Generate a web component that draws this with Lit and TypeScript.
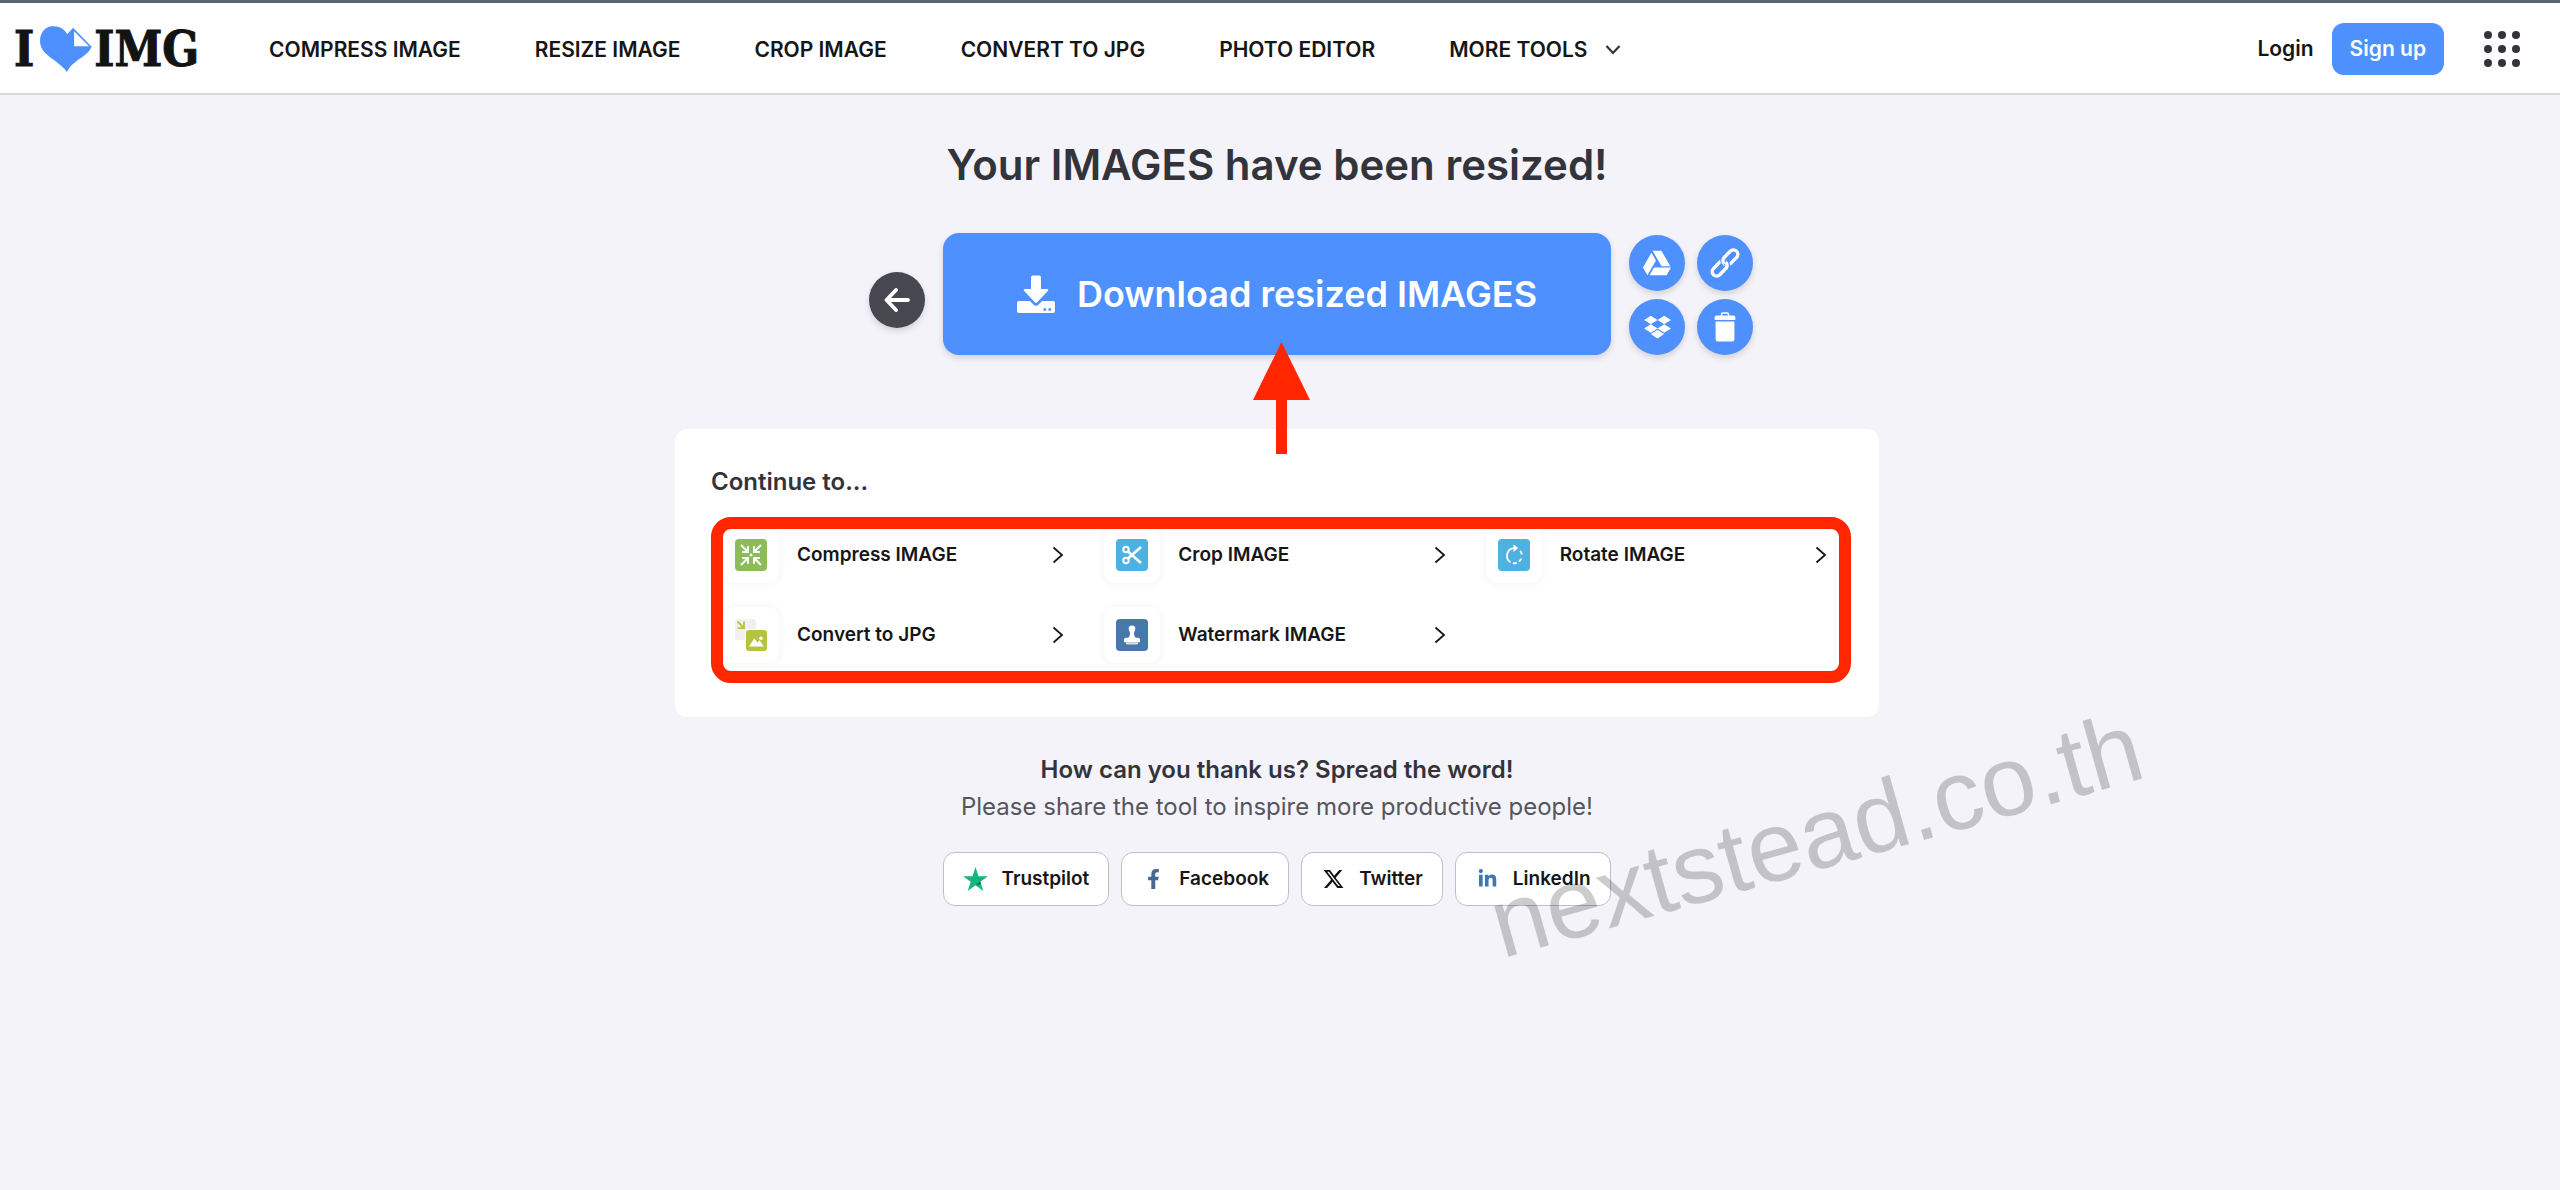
import { LitElement, html, css, svg } from "lit";
import { customElement } from "lit/decorators.js";

interface Tool {
  label: string;
  icon: unknown;
}

const arrowIn = (turn: number) => svg`
  <g transform="rotate(${turn} 16 16)">
    <path d="M6 6l6 6M13 7.200v5.800h-5.800" fill="none" stroke="#fff" stroke-width="2" />
  </g>`;

const compressIcon = html`<svg width="32" height="32" viewBox="0 0 32 32" aria-hidden="true">
  <rect width="32" height="32" rx="4" fill="#8cbc5a" />
  ${arrowIn(0)}${arrowIn(90)}${arrowIn(180)}${arrowIn(270)}
  <circle cx="16" cy="16" r="1.500" fill="#fff" />
</svg>`;

const cropIcon = html`<svg width="32" height="32" viewBox="0 0 32 32" aria-hidden="true">
  <rect width="32" height="32" rx="4" fill="#4db1e2" />
  <g fill="none" stroke="#fff" stroke-width="2">
    <circle cx="10" cy="10.500" r="2.700" />
    <circle cx="10" cy="21.500" r="2.700" />
    <path d="M12 12.500L25 24M12 19.500L25 8" stroke-width="2.600" />
  </g>
</svg>`;

const rotateIcon = html`<svg width="32" height="32" viewBox="0 0 32 32" aria-hidden="true">
  <rect width="32" height="32" rx="4" fill="#4db1e2" />
  <g fill="none" stroke="#fff" stroke-width="1.800">
    <path d="M16.500 9.200A7.600 7.600 0 0 0 12.500 23.200" />
    <path d="M14.800 24.200a7.600 7.600 0 0 0 8.800-5.800M23.900 15.500a7.600 7.600 0 0 0-2-4" stroke-dasharray="4 2.400" />
  </g>
  <path d="M15.500 5.500l4.700 3.600-4.700 3.800z" fill="#fff" />
</svg>`;

const convertIcon = html`<svg width="32" height="32" viewBox="0 0 32 32" aria-hidden="true">
  <rect width="21" height="21" rx="3" fill="#f0f0f3" />
  <path d="M2.500 2.500l6 6M9 2.500v6.700H2.500" fill="none" stroke="#b4c53f" stroke-width="1.800" />
  <rect x="10" y="10" width="22.500" height="22.500" rx="3.500" fill="#fff" />
  <rect x="11" y="11" width="21" height="21" rx="3" fill="#b4c441" />
  <path d="M14 27.500l5.300-8.300 3.200 4.400 2-2.300 4.300 6.200z" fill="#fff" />
  <circle cx="26" cy="19.300" r="1.700" fill="#fff" />
</svg>`;

const watermarkIcon = html`<svg width="32" height="32" viewBox="0 0 32 32" aria-hidden="true">
  <rect width="32" height="32" rx="4" fill="#4678ac" />
  <path
    d="M16 6.500a3.300 3.300 0 0 1 3.300 3.300c0 2.200-1.600 2.600-1.300 5.200.2 1.800.8 3.800 2.400 3.800H22a2 2 0 0 1 2 2v2.400H8v-2.400a2 2 0 0 1 2-2h1.600c1.600 0 2.200-2 2.400-3.800.3-2.600-1.300-3-1.300-5.200A3.300 3.300 0 0 1 16 6.500z"
    fill="#fff"
  />
  <path d="M10 23.200h12v1.400a1 1 0 0 1-1 1H11a1 1 0 0 1-1-1z" fill="#d9dfe6" />
</svg>`;

const chevronRight = html`<svg class="chevron" width="12" height="20" viewBox="0 0 12 20" aria-hidden="true">
  <path d="M1.500 2.500l8.500 7.500-8.500 7.500" fill="none" stroke="#161616" stroke-width="1.800" />
</svg>`;

const TOOLS: Tool[] = [
  { label: "Compress IMAGE", icon: compressIcon },
  { label: "Crop IMAGE", icon: cropIcon },
  { label: "Rotate IMAGE", icon: rotateIcon },
  { label: "Convert to JPG", icon: convertIcon },
  { label: "Watermark IMAGE", icon: watermarkIcon },
];

const NAV = ["COMPRESS IMAGE", "RESIZE IMAGE", "CROP IMAGE", "CONVERT TO JPG", "PHOTO EDITOR"];

const driveIcon = html`<svg width="28" height="28" viewBox="0 0 512 512" aria-hidden="true">
  <path
    fill="#fff"
    d="M339 314.900L175.400 32h161.200l163.600 282.900H339zm-137.500 23.600L120.900 480h310.500L512 338.500H201.500zM154.100 67.400L0 338.500 80.600 480 237 208.800 154.100 67.400z"
  />
</svg>`;

const linkIcon = html`<svg width="30" height="30" viewBox="0 0 30 30" aria-hidden="true">
  <g transform="rotate(-46 15 15)" fill="none">
    <rect x="-1.500" y="10.600" width="17.500" height="8.800" rx="4.400" stroke="#fff" stroke-width="3.400" />
    <rect x="14" y="10.600" width="17.500" height="8.800" rx="4.400" stroke="#4d90fe" stroke-width="5.400" />
    <rect x="14" y="10.600" width="17.500" height="8.800" rx="4.400" stroke="#fff" stroke-width="3.400" />
    <path d="M14.500 19.400c1-.8 1.500-2.500 1.500-4.400" stroke="#4d90fe" stroke-width="5.400" />
    <path d="M11.600 19.400c3.200 0 4.400-2.500 4.400-4.400" stroke="#fff" stroke-width="3.400" />
  </g>
</svg>`;

const dropboxIcon = html`<svg width="27" height="26" viewBox="0 0 528 512" aria-hidden="true">
  <path
    fill="#fff"
    d="M264.400 116.300l-132 84.300 132 84.300-132 84.300L0 284.100l132.300-84.300L0 116.300 132.300 32l132.100 84.300zM131.600 395.700l132-84.300 132 84.300-132 84.300-132-84.300zm132.800-111.600l132-84.300-132-83.600L395.700 32 528 116.300l-132.300 84.300L528 284.800l-132.300 84.300-131.300-85z"
  />
</svg>`;

const trashIcon = html`<svg width="22" height="30" viewBox="0 0 22 30" aria-hidden="true">
  <path d="M7.500 4V2.300A1.300 1.300 0 0 1 8.800 1h4.400a1.300 1.300 0 0 1 1.300 1.300V4" fill="none" stroke="#fff" stroke-width="1.400" />
  <path d="M2.500 3.500h17A1.800 1.800 0 0 1 21.300 5.300V8H.7V5.300A1.800 1.800 0 0 1 2.500 3.500zM1.600 9.600h18.800v17.600a2.200 2.200 0 0 1-2.200 2.200H3.800a2.200 2.200 0 0 1-2.200-2.200z" fill="#fff" />
</svg>`;

const CLOUD = [
  { label: "Save to Google Drive", icon: driveIcon },
  { label: "Share download link", icon: linkIcon },
  { label: "Save to Dropbox", icon: dropboxIcon },
  { label: "Delete files", icon: trashIcon },
];

const SHARE = [
  {
    label: "Trustpilot",
    icon: html`<svg width="25" height="24" viewBox="0 0 25 24" aria-hidden="true">
      <path d="M12.500 0l3 9.200H25l-7.700 5.600 3 9.200-7.800-5.700L4.700 24l3-9.200L0 9.200h9.500z" fill="#12b77f" />
      <path d="M18 16.800l-.7-2-4.800 3.500z" fill="#075b44" />
    </svg>`,
  },
  {
    label: "Facebook",
    icon: html`<svg width="25" height="20" viewBox="0 0 320 512" aria-hidden="true">
      <path
        fill="#48688f"
        d="M279.140 288l14.220-92.660h-88.910v-60.130c0-25.350 12.420-50.060 52.240-50.060h40.420V6.260S260.430 0 225.360 0c-73.220 0-121.080 44.380-121.080 124.720v70.620H22.890V288h81.390v224h100.170V288z"
      />
    </svg>`,
  },
  {
    label: "Twitter",
    icon: html`<svg width="25" height="22" viewBox="0 0 24 24" aria-hidden="true">
      <path
        fill="#111"
        d="M18.244 2.250h3.308l-7.227 8.260 8.502 11.240H16.170l-5.214-6.817L4.990 21.750H1.680l7.730-8.835L1.254 2.250H8.080l4.713 6.231zm-1.161 17.520h1.833L7.084 4.126H5.117z"
      />
    </svg>`,
  },
  {
    label: "LinkedIn",
    icon: html`<svg width="25" height="20" viewBox="0 0 448 512" aria-hidden="true">
      <path
        fill="#3d78b4"
        d="M100.280 448H7.400V148.900h92.880zM53.790 108.100C24.090 108.100 0 83.500 0 53.800a53.790 53.790 0 0 1 107.580 0c0 29.700-24.100 54.300-53.790 54.300zM447.900 448h-92.680V302.400c0-34.700-.7-79.200-48.290-79.200-48.290 0-55.690 37.700-55.690 76.700V448h-92.780V148.900h89.080v40.800h1.300c12.400-23.500 42.690-48.300 87.880-48.300 94 0 111.280 61.900 111.280 142.300V448z"
      />
    </svg>`,
  },
];

@customElement("app-header")
class AppHeader extends LitElement {
  static styles = css`
    :host {
      display: block;
      background: #fff;
      border-top: 3px solid #56666c;
      border-bottom: 2px solid #d9d8e0;
    }
    a {
      color: #161616;
      text-decoration: none;
    }
    .bar {
      display: flex;
      align-items: center;
      box-sizing: border-box;
      min-height: 90px;
      padding: 2px 40px 0 14px;
      font-size: 21px;
      font-weight: 600;
      line-height: 28px;
    }
    .logo {
      display: flex;
      align-items: center;
      margin-right: 70px;
      color: #131313;
      font-family: "DejaVu Serif Condensed", "DejaVu Serif", serif;
      font-size: 48px;
      font-weight: 700;
      line-height: 60px;
      -webkit-text-stroke: 1px #131313;
    }
    .heart {
      margin: 0 2px 0 6px;
    }
    .nav {
      display: flex;
      flex: 1;
      gap: 74px;
      padding-top: 2px;
      white-space: nowrap;
    }
    .more {
      display: flex;
      align-items: center;
      gap: 18px;
    }
    .account {
      display: flex;
      align-items: center;
      gap: 18px;
      white-space: nowrap;
    }
    .signup {
      padding: 12px 18px;
      border-radius: 12px;
      background: #4d90fe;
      color: #fff;
    }
    .apps {
      display: flex;
      margin-left: 22px;
      padding: 0;
      border: 0;
      background: none;
    }
  `;

  render() {
    const dots = [4, 18, 32];
    return html`<header class="bar">
      <a class="logo" href="#" aria-label="Home">
        <span>I</span>
        <svg class="heart" width="52" height="46" viewBox="118 47 157 139" aria-hidden="true">
          <path
            d="M200 72C192 54 172 45 152 48 131 51 118 70 118 92c0 30 24 44 48 62 14 11 26 20 33 32 6-12 14-22 28-32 20-14 38-24 47-44L218 52z"
            fill="#4d90fe"
          />
          <path d="M221 63v45h45z" fill="#fff" />
        </svg>
        <span>IMG</span>
      </a>
      <nav class="nav">
        ${NAV.map((label) => html`<a href="#">${label}</a>`)}
        <a class="more" href="#">
          MORE TOOLS
          <svg width="16" height="12" viewBox="0 0 16 12" aria-hidden="true">
            <path d="M1.500 2l6.500 7 6.500-7" fill="none" stroke="#33333b" stroke-width="2.200" />
          </svg>
        </a>
      </nav>
      <div class="account">
        <a href="#">Login</a>
        <a class="signup" href="#">Sign up</a>
        <button class="apps" type="button" aria-label="All products">
          <svg width="36" height="36" viewBox="0 0 36 36" aria-hidden="true">
            ${dots.map((y) => dots.map((x) => svg`<circle cx=${x} cy=${y} r="4" fill="#33333b" />`))}
          </svg>
        </button>
      </div>
    </header>`;
  }
}

@customElement("download-actions")
class DownloadActions extends LitElement {
  static styles = css`
    :host {
      display: grid;
      grid-template-columns: 1fr auto 1fr;
      gap: 18px;
      align-items: center;
    }
    .round {
      display: flex;
      align-items: center;
      justify-content: center;
      width: 56px;
      height: 56px;
      padding: 0;
      border: 0;
      border-radius: 50%;
      background: #4d90fe;
      box-shadow: 0 3px 6px rgba(0, 0, 0, 0.14);
    }
    .back {
      justify-self: end;
      margin-top: 12px;
      background: #47474f;
    }
    .download {
      position: relative;
      display: flex;
      align-items: center;
      justify-content: center;
      gap: 22px;
      min-width: 668px;
      min-height: 122px;
      box-sizing: border-box;
      border-radius: 16px;
      background: #4d90fe;
      box-shadow: 0 3px 6px rgba(0, 0, 0, 0.14);
      color: #fff;
      font-size: 36px;
      font-weight: 600;
      line-height: 44px;
      text-decoration: none;
      white-space: nowrap;
    }
    .pointer {
      position: absolute;
      top: 109px;
      left: 310px;
      z-index: 1;
    }
    .cloud {
      display: grid;
      grid-template-columns: auto auto;
      justify-content: start;
      align-self: end;
      gap: 8px 12px;
    }
  `;

  render() {
    return html`
      <button class="round back" type="button" aria-label="Back">
        <svg width="26" height="24" viewBox="0 0 26 24" aria-hidden="true">
          <path d="M12 2L2.500 12 12 22M3 12h21" fill="none" stroke="#fff" stroke-width="3.800" stroke-linecap="round" stroke-linejoin="round" />
        </svg>
      </button>
      <a class="download" href="#">
        <svg width="38" height="38" viewBox="0 0 38 38" aria-hidden="true">
          <path d="M16 .5h6a2 2 0 0 1 2 2V14h6.300a1 1 0 0 1 .7 1.700L20.200 27.200a1.700 1.700 0 0 1-2.400 0L7 15.700A1 1 0 0 1 7.700 14H14V2.500a2 2 0 0 1 2-2z" fill="#fff" />
          <path
            fill-rule="evenodd"
            d="M2 26h11l3.300 3.600a4 4 0 0 0 5.400 0L25 26h11a2 2 0 0 1 2 2v8a2 2 0 0 1-2 2H2a2 2 0 0 1-2-2v-8a2 2 0 0 1 2-2zM26.500 33.200h2.600v2.600h-2.600zM31.500 33.200h2.600v2.600h-2.600z"
            fill="#fff"
          />
        </svg>
        Download resized IMAGES
        <svg class="pointer" width="57" height="112" viewBox="0 0 57 112" aria-hidden="true">
          <path d="M28.500 0L57 58H34v54H23V58H0z" fill="#ff2600" />
        </svg>
      </a>
      <div class="cloud">
        ${CLOUD.map((c) => html`<button class="round" type="button" aria-label=${c.label}>${c.icon}</button>`)}
      </div>
    `;
  }
}

@customElement("continue-card")
class ContinueCard extends LitElement {
  static styles = css`
    :host {
      display: block;
      box-sizing: border-box;
      width: 100%;
      max-width: 1204px;
      padding: 37px 36px 54px;
      border-radius: 12px;
      background: #fff;
    }
    .heading {
      margin: 0 0 29px;
      color: #33333b;
      font-size: 24px;
      font-weight: 600;
      line-height: 32px;
    }
    .tools {
      position: relative;
      display: grid;
      grid-template-columns: repeat(3, 1fr);
      gap: 24px 40px;
      margin: 0 16px 0 12px;
    }
    .tools::after {
      content: "";
      position: absolute;
      inset: -10px -24px -20px -12px;
      border: 12px solid #ff2600;
      border-radius: 20px;
      pointer-events: none;
    }
    .tool {
      display: flex;
      align-items: center;
      gap: 18px;
      color: #161616;
      font-size: 19px;
      font-weight: 600;
      line-height: 26px;
      text-decoration: none;
      white-space: nowrap;
    }
    .tile {
      display: flex;
      align-items: center;
      justify-content: center;
      width: 56px;
      height: 56px;
      border-radius: 12px;
      box-shadow: 0 0 10px rgba(40, 50, 90, 0.06);
    }
    .chevron {
      margin-left: auto;
    }
  `;

  render() {
    return html`
      <h2 class="heading">Continue to...</h2>
      <div class="tools">
        ${TOOLS.map(
          (t) => html`<a class="tool" href="#"><span class="tile">${t.icon}</span>${t.label}${chevronRight}</a>`,
        )}
      </div>
    `;
  }
}

@customElement("share-panel")
class SharePanel extends LitElement {
  static styles = css`
    :host {
      position: relative;
      display: flex;
      flex-direction: column;
      align-items: center;
      color: #33333b;
      font-size: 24px;
      line-height: 37px;
    }
    .heading {
      margin: 0;
      font-size: 24px;
      font-weight: 600;
    }
    .text {
      margin: 0;
      color: #55555d;
    }
    .links {
      display: flex;
      gap: 12px;
      margin-top: 27px;
    }
    .link {
      display: flex;
      align-items: center;
      gap: 13px;
      padding: 12px 19px;
      border: 1px solid #c0bfc8;
      border-radius: 12px;
      background: #fff;
      color: #161616;
      font-size: 19px;
      font-weight: 600;
      line-height: 28px;
      text-decoration: none;
    }
    .watermark {
      position: absolute;
      left: calc(50% + 229px);
      bottom: -67px;
      color: rgba(0, 0, 0, 0.2);
      font-family: "Liberation Sans", Arial, sans-serif;
      font-size: 99px;
      line-height: 98px;
      white-space: nowrap;
      transform: rotate(-15.700deg);
      transform-origin: 0 100%;
      pointer-events: none;
    }
  `;

  render() {
    return html`
      <h2 class="heading">How can you thank us? Spread the word!</h2>
      <p class="text">Please share the tool to inspire more productive people!</p>
      <div class="links">
        ${SHARE.map((s) => html`<a class="link" href="#">${s.icon}${s.label}</a>`)}
      </div>
      <span class="watermark">nextstead.co.th</span>
    `;
  }
}

@customElement("app-root")
class AppRoot extends LitElement {
  static styles = css`
    :host {
      display: flex;
      flex-direction: column;
      min-height: 100vh;
      background: #f4f3fa;
      font-family: Inter, "Liberation Sans", sans-serif;
      overflow: hidden;
    }
    .main {
      display: flex;
      flex-direction: column;
      align-items: center;
      padding: 44px 6px 0 0;
    }
    .title {
      margin: 0 0 42px;
      color: #33333b;
      font-size: 42px;
      font-weight: 600;
      line-height: 52px;
    }
    .card {
      margin: 74px 0 34px;
    }
  `;

  render() {
    return html`
      <app-header></app-header>
      <main class="main">
        <h1 class="title">Your IMAGES have been resized!</h1>
        <download-actions></download-actions>
        <continue-card class="card"></continue-card>
        <share-panel></share-panel>
      </main>
    `;
  }
}
